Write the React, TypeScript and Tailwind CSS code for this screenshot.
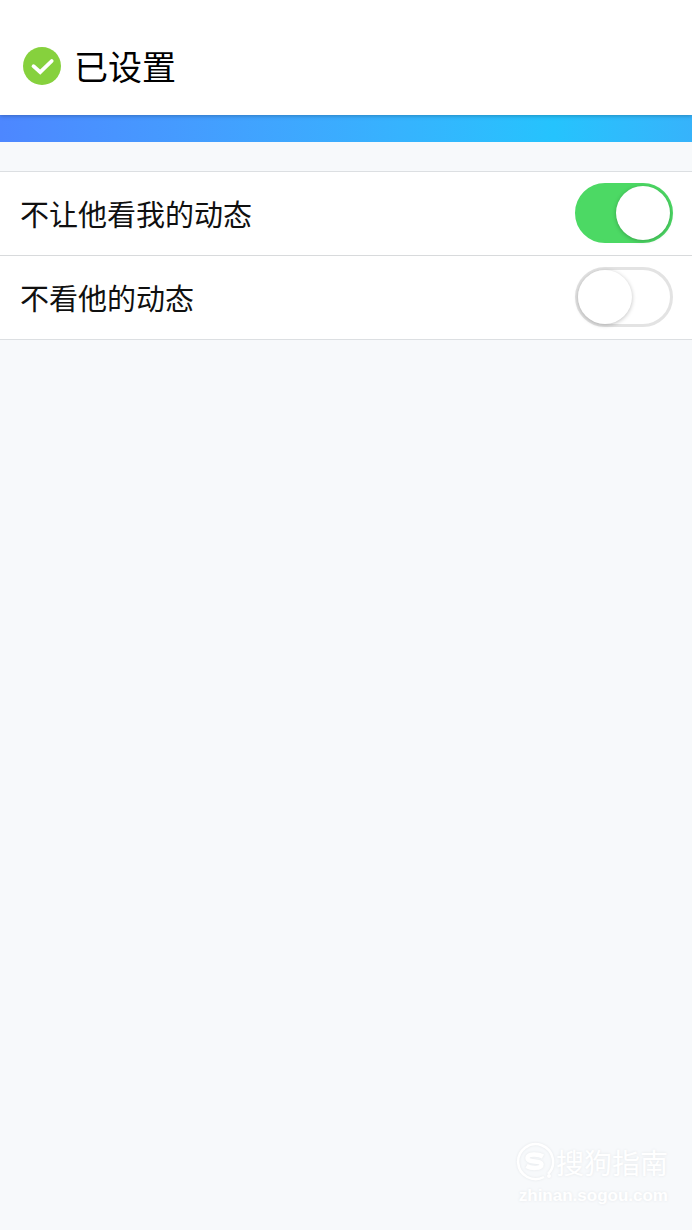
import { useState } from "react";

function SettingRow({ id, label, initial }: { id: string; label: string; initial: boolean }) {
  const [on, setOn] = useState(initial);
  return (
    <li className="flex items-center justify-between pt-[11px] pb-3">
      <label htmlFor={id} className="pl-5 text-[29px] leading-10 text-[#101010]">
        {label}
      </label>
      <span className="relative mr-[19px] flex h-[60px] w-[98px] shrink-0">
        <input
          id={id}
          type="checkbox"
          role="switch"
          checked={on}
          onChange={(e) => setOn(e.target.checked)}
          className="peer h-full w-full cursor-pointer appearance-none rounded-full border-3 border-[#e3e3e3] bg-white checked:border-[#4cd964] checked:bg-[#4cd964]"
        />
        <span className="pointer-events-none absolute top-[3px] left-[3px] size-[54px] rounded-full bg-white shadow-[0_1px_4px_rgba(0,0,0,0.25)] peer-checked:left-[41px]" />
      </span>
    </li>
  );
}

export default function App() {
  return (
    <div className="relative flex min-h-screen flex-col bg-[#f7f9fb] font-['Noto_Sans_CJK_SC',sans-serif]">
      <header className="relative bg-white shadow-[0_1px_4px_rgba(0,0,0,0.25)]">
        <div role="status" className="flex h-[115px] items-center gap-[13px] pt-[17px] pl-[23px]">
          <svg viewBox="0 0 38 38" className="size-[38px]" aria-hidden="true">
            <circle cx="19" cy="19" r="19" fill="#86d13d" />
            <path
              d="M10.5 19.2 17.2 25.2 28.7 14"
              fill="none"
              stroke="#fff"
              strokeWidth="3.8"
              strokeLinecap="round"
              strokeLinejoin="miter"
            />
          </svg>
          <span className="text-[34px] leading-10 text-black">已设置</span>
        </div>
      </header>
      <div className="h-[27px] bg-linear-to-r from-[#4d87ff] via-[#25c3fd] via-80% to-[#36b3fb]" />
      <main className="grow pt-[29px]">
        <ul className="divide-y divide-[#d8dadc] border-y border-[#dcdfe2] bg-white">
          <SettingRow id="hide-mine" label="不让他看我的动态" initial={true} />
          <SettingRow id="hide-theirs" label="不看他的动态" initial={false} />
        </ul>
      </main>
      <footer className="flex flex-col items-end pr-6 pb-5 text-white [text-shadow:0_0_3px_#e3e6e9]">
        <div className="flex items-center gap-px">
          <svg viewBox="0 0 40 40" className="size-10 drop-shadow-[0_0_1px_#e3e6e9]" fill="none" stroke="#fff" aria-hidden="true">
            <path d="M33 32A17.5 17.5 0 1 0 29 35" strokeWidth="2.5" />
            <circle cx="34" cy="34" r="2" fill="#fff" stroke="none" />
            <path
              d="M28 14.5C23 11.500 12.500 11.500 12.500 16C12.500 21 26.500 18 26.500 22.500C26.500 27 16 26.500 11.500 24"
              strokeWidth="4.500"
            />
          </svg>
          <span className="text-[28px] leading-10">搜狗指南</span>
        </div>
        <span className="font-['Liberation_Sans',sans-serif] text-[17px] leading-7 font-bold">
          zhinan.sogou.com
        </span>
      </footer>
    </div>
  );
}
